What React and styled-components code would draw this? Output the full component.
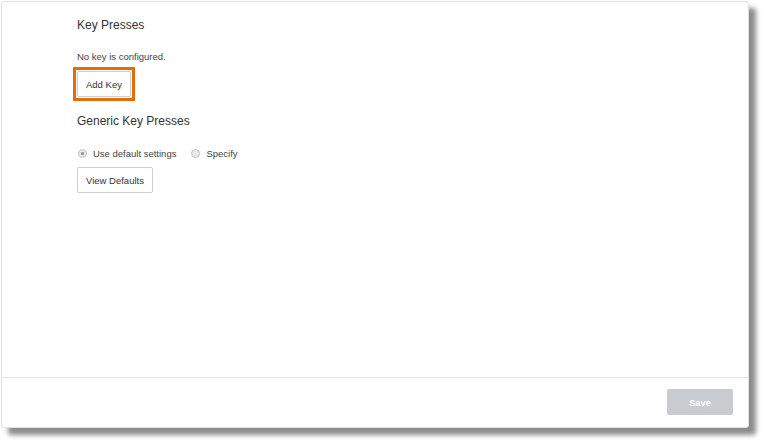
import styled, { createGlobalStyle } from 'styled-components';

const GlobalStyle = createGlobalStyle`
  html, body {
    margin: 0;
    padding: 0;
    background: #ffffff;
  }
  body {
    font-family: "Liberation Sans", Arial, sans-serif;
    color: #333333;
  }
`;

const Frame = styled.div`
  padding: 1px 0 0 1px;
  width: 764px;
  height: 443px;
  box-sizing: border-box;
`;

const Panel = styled.div`
  width: 748px;
  height: 427px;
  box-sizing: border-box;
  border: 1px solid #e1e1e1;
  border-radius: 3px;
  background: #ffffff;
  box-shadow: 7px 7px 5px rgba(0, 0, 0, 0.45);
  display: flex;
  flex-direction: column;
`;

const Content = styled.div`
  flex: 1;
  padding: 15px 0 0 75px;
`;

const SectionTitle = styled.h2`
  margin: ${props => props.$top || 0}px 0 0 0;
  font-size: 12px;
  font-weight: normal;
  line-height: 16px;
  color: #333333;
`;

const Note = styled.p`
  margin: 18px 0 0 0;
  font-size: 9.5px;
  line-height: 12px;
  color: #444444;
`;

const Highlight = styled.div`
  display: inline-block;
  margin: 4px 0 0 -4px;
  border: 3px solid #e46c0a;
  padding: 1px;
`;

const Button = styled.button`
  display: block;
  height: 26px;
  padding: 0 8px;
  border: 1px solid #cfcfcf;
  border-radius: 2px;
  background: #ffffff;
  font-family: "Liberation Sans", Arial, sans-serif;
  font-size: 9.5px;
  color: #333333;
  margin-top: ${props => props.$top || 0}px;
  cursor: pointer;
`;

const RadioRow = styled.div`
  display: flex;
  align-items: center;
  gap: 14px;
  margin-top: 17px;
  height: 14px;
`;

const RadioOption = styled.label`
  display: flex;
  align-items: center;
  gap: 6px;
  font-size: 9.5px;
  color: #444444;
`;

const RadioDot = styled.span`
  width: 7px;
  height: 7px;
  border-radius: 50%;
  border: 1px solid #c4c4c4;
  background: #e9e9e9;
  margin-left: 1px;
  display: flex;
  align-items: center;
  justify-content: center;

  &::after {
    content: '';
    width: 3px;
    height: 3px;
    border-radius: 50%;
    background: ${props => (props.$checked ? '#8a8a8a' : 'transparent')};
  }
`;

const Footer = styled.div`
  border-top: 1px solid #e4e4e4;
  height: 50px;
  box-sizing: border-box;
  display: flex;
  justify-content: flex-end;
  align-items: flex-start;
  padding: 11px 15px 0 0;
`;

const SaveButton = styled.button`
  width: 66px;
  height: 26px;
  border: none;
  border-radius: 2px;
  background: #c8ccd1;
  color: #ffffff;
  font-family: "Liberation Sans", Arial, sans-serif;
  font-size: 9.5px;
  font-weight: bold;
`;

export default function App() {
  return (
    <>
      <GlobalStyle />
      <Frame>
        <Panel>
          <Content>
            <SectionTitle>Key Presses</SectionTitle>
            <Note>No key is configured.</Note>
            <Highlight>
              <Button>Add Key</Button>
            </Highlight>
            <SectionTitle $top={12}>Generic Key Presses</SectionTitle>
            <RadioRow>
              <RadioOption>
                <RadioDot $checked />
                Use default settings
              </RadioOption>
              <RadioOption>
                <RadioDot />
                Specify
              </RadioOption>
            </RadioRow>
            <Button $top={7}>View Defaults</Button>
          </Content>
          <Footer>
            <SaveButton>Save</SaveButton>
          </Footer>
        </Panel>
      </Frame>
    </>
  );
}
